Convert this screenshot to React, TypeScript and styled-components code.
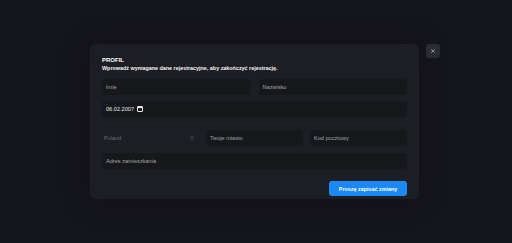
import styled, { createGlobalStyle } from 'styled-components';
import { ChevronsUpDown, X } from 'lucide-react';

const GlobalStyle = createGlobalStyle`
  html, body {
    margin: 0;
    padding: 0;
    background: #15151c;
    font-family: "Liberation Sans", Arial, sans-serif;
  }
  * { box-sizing: border-box; }
`;

function App() {
  return (
    <>
      <GlobalStyle />
      <StPage>
        <StModal>
          <StCloseButton aria-label="close">
            <X size={6} strokeWidth={2.5} />
          </StCloseButton>
          <StHead>
            <h2>PROFIL</h2>
            <p>Wprowadź wymagane dane rejestracyjne, aby zakończyć rejestrację.</p>
          </StHead>

          <StRow cols={2} gap={8}>
            <StField>Imię</StField>
            <StField>Nazwisko</StField>
          </StRow>

          <StRow cols={1} gap={0} top={6}>
            <StField filled>
              06.02.2007
              <CalendarIcon />
            </StField>
          </StRow>

          <StDivider />

          <StRow cols={3} gap={7} top={6}>
            <StSelect>
              Poland
              <ChevronsUpDown size={6} strokeWidth={2} />
            </StSelect>
            <StField>Twoje miasto</StField>
            <StField>Kod pocztowy</StField>
          </StRow>

          <StRow cols={1} gap={0} top={7}>
            <StField>Adres zamieszkania</StField>
          </StRow>

          <StFooter>
            <StSaveButton>Proszę zapisać zmiany</StSaveButton>
          </StFooter>
        </StModal>
      </StPage>
    </>
  );
}

function CalendarIcon() {
  return (
    <svg width="6" height="6" viewBox="0 0 6 6" style={{ marginLeft: 3 }}>
      <rect x="0.5" y="0.5" width="5" height="5" rx="0.5" fill="none" stroke="#e6e6e8" strokeWidth="1" />
      <rect x="0.5" y="0.5" width="5" height="1.6" fill="#e6e6e8" />
    </svg>
  );
}

export default App;

const StPage = styled.div`
  height: 243px;
  display: flex;
  justify-content: center;
  align-items: center;
  padding-right: 3px;
`;

const StModal = styled.div`
  position: relative;
  width: 329px;
  height: 155px;
  background: #1d1e23;
  border-radius: 5px;
  padding: 12px 12px 4px;
  box-shadow: 0 0 30px rgba(0, 0, 0, 0.25);
`;

const StCloseButton = styled.button`
  position: absolute;
  top: 0;
  right: -21px;
  width: 14px;
  height: 14px;
  padding: 0;
  border: none;
  border-radius: 3px;
  background: #2a2b32;
  color: #c9cacf;
  display: flex;
  align-items: center;
  justify-content: center;
`;

const StHead = styled.div`
  margin-bottom: 7px;
  h2 {
    margin: 0;
    font-size: 6px;
    line-height: 8px;
    font-weight: 700;
    color: #ffffff;
  }
  p {
    margin: 1px 0 0;
    font-size: 5.4px;
    line-height: 7px;
    font-weight: 700;
    color: #f2f2f4;
  }
`;

const StRow = styled.div<{ cols: number; gap: number; top?: number }>`
  display: grid;
  grid-template-columns: repeat(${(p) => p.cols}, 1fr);
  gap: ${(p) => p.gap}px;
  margin-top: ${(p) => p.top || 0}px;
`;

const StField = styled.div<{ filled?: boolean }>`
  height: 16px;
  display: flex;
  align-items: center;
  padding: 0 4px;
  border-radius: 3px;
  background: #17181c;
  font-size: 5.6px;
  color: ${(p) => (p.filled ? '#e8e8ea' : '#a3a4aa')};
`;

const StSelect = styled.div`
  height: 16px;
  display: flex;
  align-items: center;
  justify-content: space-between;
  padding: 0 4px 0 2px;
  font-size: 5.6px;
  color: #6a6b71;
  svg {
    color: #7a7b81;
  }
`;

const StDivider = styled.div`
  height: 1px;
  margin-top: 6px;
  background: #222328;
`;

const StFooter = styled.div`
  display: flex;
  justify-content: flex-end;
  margin-top: 12px;
`;

const StSaveButton = styled.button`
  width: 78px;
  height: 15px;
  padding: 0;
  border: none;
  border-radius: 3px;
  background: #1a88f5;
  color: #ffffff;
  font-family: inherit;
  font-size: 5.4px;
  font-weight: 700;
`;
